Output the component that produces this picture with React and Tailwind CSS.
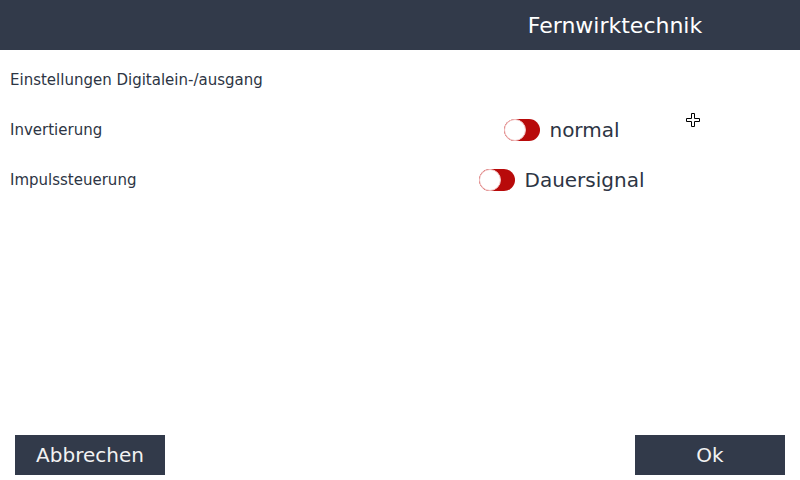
import React, { useState } from 'react';

const Toggle = ({ on, onChange }) => (
  <button
    type="button"
    onClick={() => onChange(!on)}
    className="relative w-[36px] h-[22px] rounded-full bg-[#b80a0a] shrink-0"
  >
    <span className="absolute left-0 top-0 w-[22px] h-[22px] rounded-full bg-white border border-[#f4c4c4]" />
  </button>
);

const SettingRow = ({ label, value, on, onChange }) => (
  <div className="flex items-center h-[50px]">
    <div className="w-[324px] pl-[10px] text-[15px] text-[#2d3544]">{label}</div>
    {value && (
      <div className="flex-1 flex items-center justify-center gap-[9px]">
        <Toggle on={on} onChange={onChange} />
        <span className="text-[20px] text-[#2d3544]">{value}</span>
      </div>
    )}
  </div>
);

export default function App() {
  const [invert, setInvert] = useState(false);
  const [pulse, setPulse] = useState(false);

  return (
    <div
      className="relative w-[800px] h-[480px] bg-white flex flex-col overflow-hidden"
      style={{ fontFamily: '"DejaVu Sans", Verdana, sans-serif' }}
    >
      {/* Header */}
      <div className="h-[50px] bg-[#323a4a] flex items-center shrink-0">
        <div className="w-[430px]" />
        <div className="flex-1 text-center text-[22px] text-white">Fernwirktechnik</div>
      </div>

      {/* Settings */}
      <div className="flex-1 flex flex-col pt-[5px]">
        <SettingRow label="Einstellungen Digitalein-/ausgang" />
        <SettingRow label="Invertierung" value="normal" on={invert} onChange={setInvert} />
        <SettingRow label="Impulssteuerung" value="Dauersignal" on={pulse} onChange={setPulse} />
      </div>

      {/* Footer buttons */}
      <div className="flex justify-between px-[15px] pb-[5px]">
        <button className="w-[150px] h-[40px] bg-[#323a4a] text-[20px] text-[#f2f2f2]">Abbrechen</button>
        <button className="w-[150px] h-[40px] bg-[#323a4a] text-[20px] text-[#f2f2f2]">Ok</button>
      </div>

      {/* Mouse cursor */}
      <svg className="absolute left-[686px] top-[113px]" width="15" height="15" viewBox="0 0 15 15">
        <path
          d="M5.5 0.5h3v5h5v3h-5v5h-3v-5h-5v-3h5z"
          fill="white"
          stroke="black"
          strokeWidth="1"
        />
      </svg>
    </div>
  );
}
